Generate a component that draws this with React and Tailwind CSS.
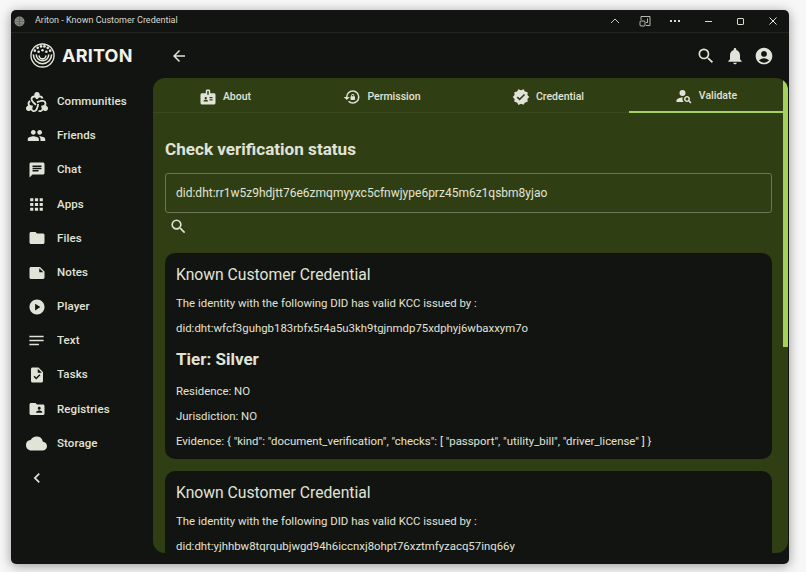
import {
  MdDiversity2, MdPeople, MdChat, MdApps, MdFolder, MdNote, MdPlayCircle, MdNotes, MdTask, MdFolderShared, MdCloud,
  MdChevronLeft, MdArrowBack, MdSearch, MdNotifications, MdAccountCircle, MdBadge, MdLockReset, MdVerified, MdPersonSearch,
} from "react-icons/md";

const NAV = [
  { label: "Communities", icon: MdDiversity2, size: 22 },
  { label: "Friends", icon: MdPeople, size: 19 },
  { label: "Chat", icon: MdChat, size: 18 },
  { label: "Apps", icon: MdApps, size: 19 },
  { label: "Files", icon: MdFolder, size: 18 },
  { label: "Notes", icon: MdNote, size: 18 },
  { label: "Player", icon: MdPlayCircle, size: 18 },
  { label: "Text", icon: MdNotes, size: 19 },
  { label: "Tasks", icon: MdTask, size: 18 },
  { label: "Registries", icon: MdFolderShared, size: 18 },
  { label: "Storage", icon: MdCloud, size: 21 },
];

const TABS = [
  { label: "About", icon: MdBadge, width: "w-[144px]" },
  { label: "Permission", icon: MdLockReset, width: "w-[170px]" },
  { label: "Credential", icon: MdVerified, width: "w-[162px]" },
  { label: "Validate", icon: MdPersonSearch, width: "flex-1", active: true },
];

function Logo() {
  return (
    <svg width="25" height="25" viewBox="0 0 26 26" fill="none" stroke="#e6e7dc">
      <circle cx="13" cy="13" r="12" strokeWidth="1.4" />
      <path d="M3.5 12a9.5 9.5 0 0 0 19 0" strokeWidth="1.6" />
      <path d="M6.5 12a6.5 6.5 0 0 0 13 0" strokeWidth="1.6" />
      <path d="M9.5 13a3.5 3.5 0 0 0 7 0" strokeWidth="1.6" />
      <g fill="#e6e7dc" stroke="none">
        <circle cx="5" cy="8" r="1.4" />
        <circle cx="8" cy="5" r="1.4" />
        <circle cx="11.5" cy="3.6" r="1.4" />
        <circle cx="15" cy="3.6" r="1.4" />
        <circle cx="18.5" cy="5" r="1.4" />
        <circle cx="21" cy="8" r="1.4" />
        <circle cx="9" cy="9" r="1.3" />
        <circle cx="17" cy="9" r="1.3" />
        <circle cx="13" cy="7.5" r="1.3" />
      </g>
    </svg>
  );
}

function TitleBar() {
  return (
    <div className="h-[23px] flex items-center border-b border-[#23261f] text-[#d9dad0] shrink-0">
      <svg className="ml-[3px]" width="11" height="11" viewBox="0 0 11 11">
        <circle cx="5.5" cy="5.5" r="5" fill="#8d8e88" />
        <path d="M1 5.5h9M5.5 1v9M2 3h7M2 8h7" stroke="#55564f" strokeWidth="0.7" />
      </svg>
      <span className="ml-[10px] text-[9px]">Ariton - Known Customer Credential</span>
      <div className="ml-auto flex items-center">
        <svg className="mr-[19px]" width="10" height="6" viewBox="0 0 10 6" fill="none" stroke="#c8c9c0"><path d="M1 5l4-4 4 4" /></svg>
        <svg className="mr-[19px]" width="12" height="12" viewBox="0 0 12 12" fill="none" stroke="#c8c9c0" strokeWidth="0.9">
          <path d="M2 5V1.5h9v9H7" />
          <rect x="1" y="6" width="5" height="5" rx="1" />
          <path d="M8.5 3.5v4H7" />
        </svg>
        <span className="mr-[25px] flex gap-[2px]">
          <i className="w-[2px] h-[2px] bg-[#d9dad0]" />
          <i className="w-[2px] h-[2px] bg-[#d9dad0]" />
          <i className="w-[2px] h-[2px] bg-[#d9dad0]" />
        </span>
        <i className="mr-[25px] w-[7px] h-px bg-[#d9dad0]" />
        <i className="mr-[25px] w-[7px] h-[7px] rounded-[1px] border border-[#d9dad0]" />
        <svg className="mr-[12px]" width="8" height="8" viewBox="0 0 8 8" stroke="#e6e7dc" strokeWidth="1"><path d="M0.5 0.5l7 7M7.5 0.5l-7 7" /></svg>
      </div>
    </div>
  );
}

function Sidebar() {
  return (
    <aside className="w-[142px] shrink-0 -mt-[45px] flex flex-col">
      <div className="h-[45px] flex items-center pl-[19px] gap-[7px] shrink-0">
        <Logo />
        <span className="font-['Inter',sans-serif] font-bold text-[18px] leading-none text-[#f0f1e8] tracking-[0.2px]">ARITON</span>
      </div>
      <nav className="flex flex-col mt-[6.5px]">
        {NAV.map(({ label, icon: Icon, size }) => (
          <div key={label} className="h-[34.2px] flex items-center text-[#e2e3d8]">
            <span className="w-[46px] flex justify-center pl-[5px]"><Icon size={size} /></span>
            <span className="text-[11.5px] font-medium tracking-[0.1px]">{label}</span>
          </div>
        ))}
        <div className="h-[34px] flex items-center pl-[16px] text-[#e2e3d8]"><MdChevronLeft size={20} /></div>
      </nav>
    </aside>
  );
}

function Card({ did, children }) {
  return (
    <section className="bg-[#111410] rounded-[10px] px-[11px] pt-[12px] pb-[5px] shrink-0 text-[#e2e3d8]">
      <h2 className="text-[15.7px] leading-[20px] mb-[6px]">Known Customer Credential</h2>
      <p className="text-[11.4px] leading-[25px]">The identity with the following DID has valid KCC issued by :</p>
      <p className="text-[11.4px] leading-[25px]">{did}</p>
      {children}
    </section>
  );
}

function Panel() {
  return (
    <main className="relative flex-1 min-w-0 bg-[#2f3f13] rounded-[12px] overflow-hidden mb-[11px] mr-px flex flex-col text-[#e2e3d8]">
      <div className="h-[35px] flex shrink-0 border-b border-[#3a4a1f] mr-[5px]">
        {TABS.map(({ label, icon: Icon, width, active }) => (
          <div key={label} className={`${width} pt-[3px] flex items-center justify-center gap-[6px] text-[10.5px] font-medium ${active ? "border-b-2 border-[#a5d15c] -mb-px" : ""}`}>
            <Icon size={18} />
            <span>{label}</span>
          </div>
        ))}
      </div>
      <div className="flex-1 min-h-0 overflow-hidden pl-[12px] pr-[16px] pt-[24px] flex flex-col">
        <h1 className="text-[17.1px] leading-[24px] font-bold">Check verification status</h1>
        <div className="mt-[12px] h-[40px] shrink-0 rounded-[3px] border border-[#6a7757] flex items-center px-[10px] text-[12px]">
          did:dht:rr1w5z9hdjtt76e6zmqmyyxc5cfnwjype6prz45m6z1qsbm8yjao
        </div>
        <div className="pl-[4px] mt-[4px] h-[36px] shrink-0"><MdSearch size={19} /></div>
        <div className="flex flex-col gap-[12px]">
          <Card did="did:dht:wfcf3guhgb183rbfx5r4a5u3kh9tgjnmdp75xdphyj6wbaxxym7o">
            <h3 className="text-[17px] font-bold leading-[24px] mt-[6px] mb-[8px]">Tier: Silver</h3>
            <p className="text-[11.4px] leading-[25px]">Residence: NO</p>
            <p className="text-[11.4px] leading-[25px]">Jurisdiction: NO</p>
            <p className="text-[11.4px] leading-[25px]">{'Evidence: { "kind": "document_verification", "checks": [ "passport", "utility_bill", "driver_license" ] }'}</p>
          </Card>
          <Card did="did:dht:yjhhbw8tqrqubjwgd94h6iccnxj8ohpt76xztmfyzacq57inq66y" />
        </div>
      </div>
      <div className="absolute right-0 top-[2px] w-[5px] h-[267px] bg-[#a5d15c] rounded-tr-[12px]" />
    </main>
  );
}

export default function App() {
  return (
    <div className="w-[806px] h-[572px] bg-[#f7f7f7] pt-[10px] pl-[11px] font-['Roboto',sans-serif] overflow-hidden">
      <div className="w-[778px] h-[554px] bg-[#111410] rounded-[5px] shadow-[0_2px_12px_rgba(0,0,0,0.4)] flex flex-col overflow-hidden">
        <TitleBar />
        <div className="h-[45px] shrink-0 flex items-center pl-[159px] pr-[15px] text-[#e2e3d8]">
          <MdArrowBack size={18} />
          <div className="ml-auto flex items-center gap-[9px]">
            <MdSearch size={20} />
            <MdNotifications size={20} />
            <MdAccountCircle size={20} />
          </div>
        </div>
        <div className="flex-1 min-h-0 flex">
          <Sidebar />
          <Panel />
        </div>
      </div>
    </div>
  );
}
